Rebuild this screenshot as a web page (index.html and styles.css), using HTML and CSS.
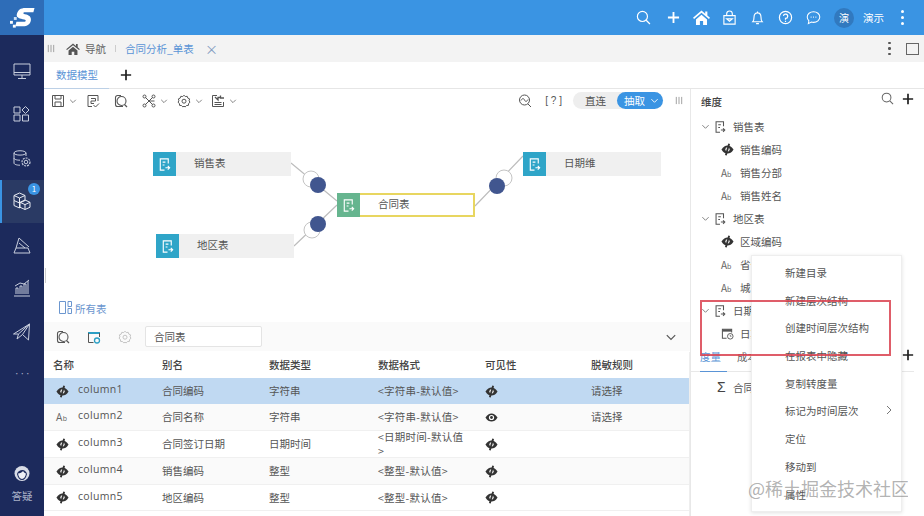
FILE: index.html
```html
<!DOCTYPE html>
<html lang="zh-CN">
<head>
<meta charset="utf-8">
<title>数据模型</title>
<link rel="stylesheet" href="styles.css">
</head>
<body>
<svg class="defs" aria-hidden="true">
  <symbol id="doc" viewBox="0 0 16 16"><path d="M12 7V2H3.500v12H8" fill="none" stroke="currentColor" stroke-width="1.200"/><path d="M6 5.500h3M6 8.500h2M9 11.500h4.500M11.500 9.500l2 2-2 2" fill="none" stroke="currentColor" stroke-width="1.200"/></symbol>
  <symbol id="eye-off" viewBox="0 0 14 14"><path d="M.5 7C2.500 3.800 4.600 2.600 7 2.600S11.500 3.800 13.500 7C11.500 10.200 9.400 11.400 7 11.400S2.500 10.200.5 7Z" fill="currentColor"/><circle cx="7" cy="7" r="2.300" fill="#fff"/><path d="M8.800.8 5.200 13.200" stroke="currentColor" stroke-width="2"/></symbol>
  <symbol id="eye" viewBox="0 0 14 14"><path d="M.5 7C2.500 3.800 4.600 2.600 7 2.600S11.500 3.800 13.500 7C11.500 10.200 9.400 11.400 7 11.400S2.500 10.200.5 7Z" fill="currentColor"/><circle cx="7" cy="7" r="2.800" fill="#fff"/><circle cx="7" cy="7" r="1.500" fill="currentColor"/></symbol>
  <symbol id="chev" viewBox="0 0 10 10"><path d="M1.500 3.500 5 7l3.500-3.500" fill="none" stroke="currentColor" stroke-width="1"/></symbol>
  <symbol id="plus" viewBox="0 0 14 14"><path d="M7 1v12M1 7h12" fill="none" stroke="currentColor" stroke-width="2"/></symbol>
  <symbol id="lens" viewBox="0 0 14 14"><circle cx="6" cy="6" r="4.700" fill="none" stroke="currentColor" stroke-width="1.100"/><path d="m9.500 9.500 3.500 3.500" stroke="currentColor" stroke-width="1.200"/></symbol>
  <symbol id="boxlens" viewBox="0 0 14 14"><path d="M7 1.500H3.500a2 2 0 0 0-2 2v7a2 2 0 0 0 2 2H9" fill="none" stroke="currentColor" stroke-width="1.100"/><circle cx="7.500" cy="7" r="4.500" fill="none" stroke="currentColor" stroke-width="1.100"/><path d="m10.500 10.500 2.500 2.500" stroke="currentColor" stroke-width="1.200"/></symbol>
  <symbol id="gear" viewBox="0 0 14 14"><path d="M7 1.200 8.300 2.600 10.200 2.300 10.800 4.100 12.600 4.900 12.100 6.800 13 8.200 11.600 9.500 11.400 11.400 9.500 11.500 8.200 12.900 7 12.300 5.800 12.900 4.500 11.500 2.600 11.400 2.400 9.500 1 8.200 1.900 6.800 1.400 4.900 3.200 4.100 3.800 2.300 5.700 2.600Z" fill="none" stroke="currentColor" stroke-width="1"/><circle cx="7" cy="7.200" r="2" fill="none" stroke="currentColor" stroke-width="1"/></symbol>
  <symbol id="lines" viewBox="0 0 8 10"><path d="M1 1v8M4 1v8M7 1v8" stroke="currentColor" stroke-width="1"/></symbol>
  <symbol id="home" viewBox="0 0 16 14"><path d="M8 .5 0 7.200l1 1.100L8 2.500l7 5.800 1-1.100-2.500-2.100V1.300h-2v2.200ZM2.800 8.800V14h3.700v-3.800h3V14h3.700V8.800L8 4.500Z" fill="currentColor"/></symbol>
</svg>

<div class="app">
  <header class="topbar">
    <div class="logo">
      <svg class="logo-mark" viewBox="0 0 26 24"><path d="M7 8.500C8 3.500 11 1.500 16 1.500h9.500l-1.200 4.500H15.500c-2 0-2.200 1.600 0 2 4.500.8 6.800 2.800 6.200 6.500-.6 4-3.800 6-8.200 6H5.500l1.200-4.500h7.800c2.300 0 2.600-2 .3-2.500C10.500 12.600 6.500 11.600 7 8.500Z" fill="#fff"/><rect x="0" y="15" width="3" height="3" fill="#fff"/><rect x="4" y="11" width="3" height="3" fill="#cfe2f7"/><rect x="3" y="19" width="3" height="3" fill="#fff"/></svg>
    </div>
    <div class="top-actions">
      <svg class="ti ti-search"><use href="#lens"/></svg>
      <svg class="ti ti-plus"><use href="#plus"/></svg>
      <svg class="ti ti-home"><use href="#home"/></svg>
      <svg class="ti ti-stroke" viewBox="0 0 16 16"><path d="M2 6h12v9H2ZM5 6V4a3 3 0 0 1 6 0v2M5 9.500h6L8 12Z" fill="none" stroke="currentColor" stroke-width="1.200"/></svg>
      <svg class="ti ti-stroke" viewBox="0 0 16 16"><path d="M3 12.500c1.200-1.300 1.300-2.500 1.300-5C4.300 4.500 6 3 8 3s3.700 1.500 3.700 4.500c0 2.500.1 3.700 1.300 5ZM6.500 14.500h3M8 1.500V3" fill="none" stroke="currentColor" stroke-width="1.200"/></svg>
      <svg class="ti ti-stroke" viewBox="0 0 16 16"><circle cx="8" cy="8" r="6.500" fill="none" stroke="currentColor" stroke-width="1.300"/><path d="M5.800 6.300A2.300 2.300 0 1 1 8 9v1.500M8 11.500v1.300" fill="none" stroke="currentColor" stroke-width="1.300"/></svg>
      <svg class="ti ti-stroke" viewBox="0 0 16 16"><path d="M8 1.800c3.800 0 6.700 2.500 6.700 5.700s-2.900 5.700-6.700 5.700c-.8 0-1.600-.1-2.300-.3L2.500 14.500l.6-3C2 10.400 1.300 9 1.300 7.500c0-3.200 2.900-5.700 6.700-5.700Z" fill="none" stroke="currentColor" stroke-width="1.100"/><path d="M5 7.500h.9M7.600 7.500h.9M10.100 7.500h.9" stroke="currentColor" stroke-width="1.400"/></svg>
      <span class="avatar">演</span>
      <span class="username">演示</span>
      <span class="kebab kebab-light"><i></i><i></i><i></i></span>
    </div>
  </header>

  <div class="body">
    <nav class="sidebar">
      <a class="side-item"><svg class="si" viewBox="0 0 20 20"><path d="M2 3h16v11H2ZM2 11.500h16M10 14v3M6 17.500h8" fill="none" stroke="currentColor" stroke-width="1"/></svg></a>
      <a class="side-item"><svg class="si" viewBox="0 0 20 20"><path d="M2 3h6v6H2ZM2 11h6v6H2ZM10.500 11h6v6h-6ZM13.500 2.500l3.500 3.500-3.500 3.500L10 6Z" fill="none" stroke="currentColor" stroke-width="1"/></svg></a>
      <a class="side-item"><svg class="si" viewBox="0 0 20 20"><path d="M2 5c0-3 12-3 12 0v3M2 5v10c0 1.500 3 2.200 6 2.200M2 5c0 2.800 12 2.800 12 0M2 10c0 1.500 3 2.200 6 2.200" fill="none" stroke="currentColor" stroke-width="1"/><circle cx="14" cy="14" r="1.800" fill="none" stroke="currentColor" stroke-width="1"/><circle cx="14" cy="14" r="4" fill="none" stroke="currentColor" stroke-width="1.200" stroke-dasharray="2 1"/></svg></a>
      <a class="side-item side-active"><svg class="si" viewBox="0 0 20 20"><path d="M7.500 2 13 4.500v5l-5.500 2.500L2 9.500v-5ZM2 4.500 7.500 7 13 4.500M7.500 7v10L2 14.500v-5" fill="none" stroke="currentColor" stroke-width="1"/><path d="M13 9l5 2.300v5L13 18.500l-5-2.200v-5ZM8 11.300l5 2.300 5-2.300M13 13.600v4.900" fill="none" stroke="currentColor" stroke-width="1"/></svg><span class="badge">1</span></a>
      <a class="side-item"><svg class="si" viewBox="0 0 20 20"><path d="M2 18h16l-2-5H4ZM4 13l3-10 10 9M7 8l6 5" fill="none" stroke="currentColor" stroke-width="1"/></svg></a>
      <a class="side-item"><svg class="si" viewBox="0 0 20 20"><path d="M2 18h16M4 16v-6h2v6M8 16V8h2v8M12 16V6h2v10M16 16V3M3 8l5-3 4 1 5-4" fill="none" stroke="currentColor" stroke-width="1"/></svg></a>
      <a class="side-item"><svg class="si" viewBox="0 0 20 20"><path d="M1.500 12 17.500 2l-1 16-6-5.500L5 17l1.500-5ZM6.500 12 17.500 2M10.500 12.500 17.500 2" fill="none" stroke="currentColor" stroke-width="1"/></svg></a>
      <a class="side-item side-more">•••</a>
      <a class="side-help">
        <svg class="help-icon" viewBox="0 0 18 18"><circle cx="9" cy="8.500" r="7.500" fill="#d8dce6"/><path d="M4 9c1-3 3-4 5.500-4 2 0 3.500 1.500 4.500 4-1 4-2.500 6-5 6s-4-2-5-6Z" fill="#1c2a5c"/><path d="M5 8.500c2 0 4-1 5-2.500 1 1.500 2 2.500 3 2.500-.5 3-2 5.500-4 5.500s-3.500-2.500-4-5.500Z" fill="#eef0f5"/></svg>
        <span>答疑</span>
      </a>
    </nav>

    <main class="main">
      <div class="tabbar">
        <svg class="grip"><use href="#lines"/></svg>
        <svg class="crumb-home"><use href="#home"/></svg>
        <span class="crumb">导航</span>
        <span class="crumb-sep"></span>
        <span class="crumb-active">合同分析_单表</span>
        <span class="crumb-close">×</span>
        <span class="kebab tab-kebab"><i></i><i></i><i></i></span>
        <span class="maximize"></span>
      </div>
      <div class="tabs">
        <span class="tab-active">数据模型</span>
        <svg class="tab-plus"><use href="#plus"/></svg>
      </div>

      <div class="content">
        <section class="left">
          <div class="toolbar">
            <svg class="tool" viewBox="0 0 14 14"><path d="M1.500 1.500h11v11h-11ZM4 1.500v3.500h6V1.500M4 12.500V8h6v4.500" fill="none" stroke="currentColor" stroke-width="1"/></svg>
            <svg class="tchev"><use href="#chev"/></svg>
            <svg class="tool tool-gap" viewBox="0 0 14 14"><path d="M6 12.500H2V1.500h10v5.500M5 4.500h4.500V7H5v2.500h3M7.500 11l2 2 3.500-3.500" fill="none" stroke="currentColor" stroke-width="1"/></svg>
            <svg class="tool tool-gap2"><use href="#boxlens"/></svg>
            <svg class="tool tool-gap2" viewBox="0 0 14 14"><g fill="none" stroke="currentColor" stroke-width="1"><circle cx="2.500" cy="2.500" r="1.500"/><circle cx="2.500" cy="11.500" r="1.500"/><circle cx="11.500" cy="2.500" r="1.500"/><circle cx="11.500" cy="11.500" r="1.500"/><path d="M3.500 3.500 7 7l3.500-3.500M3.500 10.500 7 7l3.500 3.500M7 7h5.500"/></g></svg>
            <svg class="tchev"><use href="#chev"/></svg>
            <svg class="tool tool-gap3"><use href="#gear"/></svg>
            <svg class="tchev"><use href="#chev"/></svg>
            <svg class="tool tool-gap4" viewBox="0 0 14 14"><path d="M6 1.500H1.500v11h11V8M3.500 10.500h7M3.500 8.500h7" fill="none" stroke="currentColor" stroke-width="1"/><path d="M4 3l3 3V3.500h2.500V1.500M9 4h4" fill="none" stroke="currentColor" stroke-width="1.300"/></svg>
            <svg class="tchev"><use href="#chev"/></svg>
            <span class="spacer"></span>
            <svg class="tool" viewBox="0 0 14 14"><circle cx="6.500" cy="6" r="5" fill="none" stroke="currentColor" stroke-width="1"/><path d="m10 10 3 3M3 6.500C4.500 4 5.500 4 6.500 6S8.500 8 10 5.500" fill="none" stroke="currentColor" stroke-width="1"/></svg>
            <span class="bracket">[ ? ]</span>
            <div class="switch">
              <span class="switch-off">直连</span>
              <span class="switch-on">抽取<svg class="switch-chev"><use href="#chev"/></svg></span>
            </div>
            <svg class="grip grip-right"><use href="#lines"/></svg>
          </div>

          <div class="canvas">
            <svg class="links" viewBox="44 111 646 211">
              <g stroke="#bdbdbd" stroke-width="1.200" fill="none">
                <path d="M291 162 337 200M294 245 337 204M475 205 523 155"/>
              </g>
              <g fill="#fff" stroke="#c4c4c4">
                <circle cx="311" cy="178" r="8"/>
                <circle cx="312" cy="229" r="8"/>
                <circle cx="504" cy="177" r="8"/>
              </g>
              <g fill="#41568f">
                <circle cx="318" cy="184" r="8"/>
                <circle cx="318" cy="223" r="8"/>
                <circle cx="497" cy="185" r="8"/>
              </g>
            </svg>
            <div class="node node-sales"><span class="node-icon"><svg><use href="#doc"/></svg></span><span class="node-label">销售表</span></div>
            <div class="node node-area"><span class="node-icon"><svg><use href="#doc"/></svg></span><span class="node-label">地区表</span></div>
            <div class="node node-date"><span class="node-icon"><svg><use href="#doc"/></svg></span><span class="node-label">日期维</span></div>
            <div class="node node-fact"><span class="node-icon"><svg><use href="#doc"/></svg></span><span class="node-label">合同表</span></div>
            <div class="all-tables">
              <svg class="all-icon" viewBox="0 0 13 13"><path d="M.5.500h6v12h-6ZM9 .500h3.500v5H9ZM9 7.500h3.500v5H9Z" fill="none" stroke="currentColor"/></svg>
              <span>所有表</span>
            </div>
          </div>

          <div class="table-tools">
            <svg class="tool tt-first"><use href="#boxlens"/></svg>
            <svg class="tool tt-blue" viewBox="0 0 14 14"><path d="M1 3h12" stroke="#2a9ec4" stroke-width="2"/><path d="M1.500 3v9.500h5M12.500 3v4" fill="none" stroke="#555" stroke-width="1"/><circle cx="10" cy="10.500" r="2.500" fill="none" stroke="#2a9ec4" stroke-width="1.300"/></svg>
            <svg class="tool tt-gear"><use href="#gear"/></svg>
            <div class="name-input">合同表</div>
            <span class="spacer"></span>
            <svg class="tt-chev"><use href="#chev"/></svg>
          </div>

          <div class="grid">
            <div class="row head"><span>名称</span><span>别名</span><span>数据类型</span><span>数据格式</span><span>可见性</span><span>脱敏规则</span></div>
            <div class="row selected">
              <span class="name"><svg class="fi"><use href="#eye-off"/></svg><b class="col">column1</b></span><span>合同编码</span><span>字符串</span><span class="fmt">&lt;字符串-默认值&gt;</span><span><svg class="vis"><use href="#eye-off"/></svg></span><span>请选择</span>
            </div>
            <div class="row stripe">
              <span class="name"><span class="ab">A<small>b</small></span><b class="col">column2</b></span><span>合同名称</span><span>字符串</span><span class="fmt">&lt;字符串-默认值&gt;</span><span><svg class="vis"><use href="#eye"/></svg></span><span>请选择</span>
            </div>
            <div class="row">
              <span class="name"><svg class="fi"><use href="#eye-off"/></svg><b class="col">column3</b></span><span>合同签订日期</span><span>日期时间</span><span class="fmt wrap">&lt;日期时间-默认值<br>&gt;</span><span><svg class="vis"><use href="#eye-off"/></svg></span><span></span>
            </div>
            <div class="row stripe">
              <span class="name"><svg class="fi"><use href="#eye-off"/></svg><b class="col">column4</b></span><span>销售编码</span><span>整型</span><span class="fmt">&lt;整型-默认值&gt;</span><span><svg class="vis"><use href="#eye-off"/></svg></span><span></span>
            </div>
            <div class="row">
              <span class="name"><svg class="fi"><use href="#eye-off"/></svg><b class="col">column5</b></span><span>地区编码</span><span>整型</span><span class="fmt">&lt;整型-默认值&gt;</span><span><svg class="vis"><use href="#eye-off"/></svg></span><span></span>
            </div>
          </div>
        </section>

        <aside class="right">
          <div class="right-head">
            <strong>维度</strong>
            <span class="spacer"></span>
            <svg class="rh-search"><use href="#lens"/></svg>
            <svg class="rh-plus"><use href="#plus"/></svg>
          </div>
          <ul class="tree">
            <li class="t-group"><svg class="t-chev"><use href="#chev"/></svg><svg class="t-doc"><use href="#doc"/></svg>销售表</li>
            <li class="t-leaf"><svg class="t-ic"><use href="#eye-off"/></svg>销售编码</li>
            <li class="t-leaf"><span class="t-ab">A<small>b</small></span>销售分部</li>
            <li class="t-leaf"><span class="t-ab">A<small>b</small></span>销售姓名</li>
            <li class="t-group"><svg class="t-chev"><use href="#chev"/></svg><svg class="t-doc"><use href="#doc"/></svg>地区表</li>
            <li class="t-leaf"><svg class="t-ic"><use href="#eye-off"/></svg>区域编码</li>
            <li class="t-leaf"><span class="t-ab">A<small>b</small></span>省份</li>
            <li class="t-leaf"><span class="t-ab">A<small>b</small></span>城市</li>
            <li class="t-group"><svg class="t-chev"><use href="#chev"/></svg><svg class="t-doc"><use href="#doc"/></svg>日期维</li>
            <li class="t-leaf"><svg class="t-ic t-cal" viewBox="0 0 14 14"><path d="M6 12H1.500V2.500h10V6" fill="none" stroke="currentColor" stroke-width="1.100"/><path d="M1.500 2.500h10V5h-10Z" fill="currentColor"/><circle cx="10" cy="10" r="3" fill="none" stroke="currentColor"/><path d="M10 8.500V10h1.300" fill="none" stroke="currentColor" stroke-width=".8"/></svg>日期</li>
          </ul>
          <div class="measure-tabs">
            <span class="m-active">度量</span>
            <span class="m-tab">成本</span>
            <span class="spacer"></span>
            <svg class="rh-plus"><use href="#plus"/></svg>
          </div>
          <div class="measure-row"><span class="sigma">Σ</span>合同金额</div>
        </aside>
      </div>
    </main>
  </div>

  <ul class="menu">
    <li>新建目录</li>
    <li>新建层次结构</li>
    <li>创建时间层次结构</li>
    <li>在报表中隐藏</li>
    <li>复制转度量</li>
    <li class="has-sub">标记为时间层次<svg class="sub-arrow" viewBox="0 0 8 10"><path d="m2 1 4 4-4 4" fill="none" stroke="currentColor"/></svg></li>
    <li>定位</li>
    <li>移动到</li>
    <li>属性</li>
  </ul>
  <div class="redbox"></div>
  <div class="splitter"></div>
  <div class="watermark">@稀土掘金技术社区</div>
</div>
</body>
</html>
```
FILE: styles.css
```css
* { box-sizing: border-box; }
html, body { margin: 0; padding: 0; height: 100%; overflow: hidden; }
body {
  font-family: "Noto Sans CJK SC", "Liberation Sans", sans-serif;
  font-size: 10.5px;
  color: #555;
  background: #fff;
}
ul { list-style: none; margin: 0; padding: 0; }
.defs { position: absolute; width: 0; height: 0; }
.spacer { flex: 1; }

.app { position: relative; width: 924px; height: 516px; display: flex; flex-direction: column; overflow: hidden; }

/* top bar */
.topbar { height: 35px; flex: none; display: flex; background: #3a94e3; color: #fff; }
.logo { width: 44px; background: #2e6db8; display: flex; align-items: center; justify-content: center; }
.logo-mark { width: 25px; height: 24px; }
.top-actions { flex: 1; display: flex; align-items: center; justify-content: flex-end; padding-right: 20px; }
.ti { width: 15px; height: 15px; color: #fff; }
.ti-search { margin-right: 16px; }
.ti-plus { width: 13px; height: 13px; margin-right: 13px; }
.ti-home { width: 17px; height: 15px; margin-right: 12px; }
.ti-stroke { margin-right: 13px; }
.avatar { width: 20px; height: 20px; border-radius: 50%; background: #3179bf; text-align: center; line-height: 20px; font-size: 10px; }
.username { margin: 0 17px 0 9px; font-size: 10.5px; }
.kebab { display: flex; flex-direction: column; gap: 3px; width: 3px; }
.kebab i { display: block; width: 3px; height: 3px; border-radius: 50%; background: #fff; }
.tab-kebab i { background: #555; width: 2.500px; height: 2.500px; }

.body { flex: 1; display: flex; min-height: 0; }

/* sidebar */
.sidebar { width: 44px; flex: none; background: #1c2a5c; color: #c8cedd; display: flex; flex-direction: column; padding-top: 14px; }
.side-item { position: relative; height: 43.500px; flex: none; display: flex; align-items: center; justify-content: center; }
.si { width: 20px; height: 20px; }
.side-active { background: #2a3a64; border-left: 2px solid #3a94e3; color: #e8ebf2; padding-right: 2px; }
.badge { position: absolute; top: 3px; right: 4px; width: 12px; height: 12px; border-radius: 50%; background: #3a94e3; color: #fff; font-size: 8px; line-height: 12px; text-align: center; }
.side-more { font-size: 6px; letter-spacing: -.5px; color: #aab2c8; height: 40px; }
.side-help { margin-top: auto; height: 51px; display: flex; flex-direction: column; align-items: center; font-size: 10.500px; color: #aab2c8; }
.help-icon { width: 18px; height: 18px; margin-bottom: 5px; }

.main { flex: 1; min-width: 0; display: flex; flex-direction: column; }

/* tab bar */
.tabbar { height: 27px; flex: none; display: flex; align-items: center; background: #f3f3f3; padding-left: 3px; padding-right: 5px; }
.grip { width: 8px; height: 9px; color: #999; }
.crumb-home { width: 14px; height: 12px; margin-left: 11px; color: #555; }
.crumb { margin-left: 5px; color: #666; margin-top: -1px; }
.crumb-sep { width: 1px; height: 7px; margin: 0 9px; background: #ccc; }
.crumb-active { color: #5a94d6; margin-top: -1px; }
.crumb-close { margin-left: 11px; color: #7f9ac0; font-size: 13px; line-height: 1; }
.tab-kebab { margin-left: auto; margin-right: 15px; gap: 3px; }
.maximize { width: 13px; height: 12px; border: 1px solid #666; }

/* tabs */
.tabs { height: 27px; flex: none; display: flex; align-items: center; border-bottom: 1px solid #e6e6e6; position: relative; }
.tab-active { width: 65px; height: 27px; padding-left: 12px; line-height: 25px; color: #5a94d6; border-bottom: 1px solid #bcd0e6; }
.tab-plus { width: 12px; height: 12px; margin-left: 11px; color: #222; }

.content { flex: 1; display: flex; min-height: 0; }
.left { width: 646px; flex: none; display: flex; flex-direction: column; min-height: 0; }

/* toolbar */
.toolbar { height: 23px; flex: none; display: flex; align-items: center; padding: 0 7px; color: #555; }
.tool { width: 14px; height: 14px; flex: none; color: #555; }
.tchev { width: 8px; height: 8px; margin-left: 4px; color: #666; }
.tool-gap { margin-left: 9px; }
.tool-gap2 { margin-left: 14px; }
.tool-gap3 { margin-left: 9px; }
.tool-gap4 { margin-left: 8px; }
.bracket { margin: 0 11px 0 13px; font-size: 10px; color: #555; font-family: "Liberation Sans", sans-serif; white-space: nowrap; }
.switch { width: 90px; height: 17px; border-radius: 9px; background: #eeeeee; display: flex; align-items: center; justify-content: space-between; }
.switch-off { margin-left: 12px; }
.switch-on { width: 46px; height: 17px; border-radius: 9px; background: #3a94e3; color: #fff; padding-left: 7px; line-height: 17px; display: flex; align-items: center; }
.switch-chev { width: 9px; height: 9px; margin-left: 5px; color: #fff; }
.grip-right { margin-left: 12px; }

/* canvas */
.canvas { position: relative; height: 210px; flex: none; display: flex; align-items: flex-end; padding: 0 0 6px 15px; }
.links { position: absolute; left: 0; top: 0; width: 646px; height: 211px; }
.node { position: absolute; width: 138px; height: 24px; display: flex; align-items: center; background: #f0f0f0; }
.node-icon { width: 23px; height: 100%; flex: none; background: #2fa5c8; color: #fff; display: flex; align-items: center; justify-content: center; }
.node-icon svg { width: 15px; height: 15px; }
.node-label { margin-left: 18px; margin-top: -3px; color: #555; }
.node-sales { left: 109px; top: 40px; }
.node-area { left: 112px; top: 122px; }
.node-date { left: 479px; top: 40px; }
.node-fact { left: 293px; top: 81px; background: #fff; border: 2px solid #e8d660; }
.node-fact .node-icon { background: #66b58f; margin-left: -2px; height: 24px; }
.all-tables { position: relative; display: flex; align-items: flex-end; gap: 3px; color: #6b96cf; }
.all-icon { width: 13px; height: 13px; margin-bottom: 2px; }

/* table tools */
.table-tools { height: 29px; flex: none; display: flex; align-items: center; background: #fafafa; padding: 0 13px 0 12px; }
.tt-first { margin-right: 17px; }
.tt-blue { margin-right: 17px; }
.tt-gear { margin-right: 13px; color: #c4c4c4; }
.name-input { width: 117px; height: 21px; padding-left: 8px; line-height: 20px; border: 1px solid #e4e4e4; border-radius: 2px; background: #fff; }
.tt-chev { width: 12px; height: 12px; color: #555; }

/* grid */
.grid { flex: 1; margin-top: 1px; border-right: 1px solid #eee; }
.row { display: grid; grid-template-columns: 109px 107px 109px 107px 106px 1fr; align-items: center; height: 26px; border-bottom: 1px solid #f0f0f0; }
.row > span { padding-left: 9px; margin-top: -1px; }
.head { height: 26px; border-bottom: 0; font-weight: 500; color: #444; }
.selected { background: #c0d9f2; border-bottom: 0; }
.stripe { background: #fafafa; height: 27px; }
.row:nth-child(4) { height: 27px; }
.name { display: flex; align-items: center; font-family: "Open Sans", "Liberation Sans", sans-serif; letter-spacing: .3px; }
.col { font-weight: 400; margin-top: -3px; }
.fi { width: 13px; height: 13px; margin: 1px 9px 0 3px; color: #333; flex: none; }
.ab { width: 13px; margin: 1px 9px 0 3px; font-size: 10px; color: #666; flex: none; line-height: 1; }
.ab small, .t-ab small { font-size: 7px; }
.vis { display: block; width: 13px; height: 13px; color: #333; margin-top: 1px; }
.fmt { letter-spacing: .25px; }
.wrap { line-height: 13.500px; }

/* right */
.right { flex: 1; min-width: 0; border-left: 1px solid #e8e8e8; padding-left: 10px; padding-right: 10px; }
.right-head { height: 24px; display: flex; align-items: center; }
.right-head strong { font-weight: 500; color: #444; }
.rh-search { width: 13px; height: 13px; color: #666; margin-right: 8px; margin-top: -5px; }
.rh-plus { width: 12px; height: 12px; color: #222; margin-top: -5px; }
.tree { padding-top: 2px; }
.tree li { height: 23px; display: flex; align-items: center; white-space: nowrap; }
.t-chev { width: 9px; height: 9px; margin-right: 3px; color: #777; }
.t-doc { width: 14px; height: 14px; margin-right: 6px; color: #555; }
.t-leaf { padding-left: 20px; }
.t-ic { width: 13px; height: 13px; margin-right: 6px; color: #333; flex: none; }
.t-cal { color: #555; }
.t-ab { width: 13px; margin-right: 6px; font-size: 10px; color: #666; flex: none; }
.measure-tabs { position: relative; height: 27px; display: flex; align-items: center; border-bottom: 1px solid #e8e8e8; margin-left: -10px; padding: 0 0 3px 9px; }
.m-active { color: #5a94d6; margin-right: 16px; }
.m-active::after { content: ""; position: absolute; left: 9px; bottom: -1px; width: 27px; height: 1px; background: #5a94d6; }
.m-tab { color: #666; }
.measure-tabs .rh-plus { margin-top: -3px; }
.measure-row { height: 30px; display: flex; align-items: center; padding-left: 16px; white-space: nowrap; }
.sigma { width: 16px; font-size: 14px; color: #444; line-height: 1; font-family: "Liberation Sans", sans-serif; }

/* overlays */
.menu { position: absolute; left: 751px; top: 255px; width: 151px; height: 257px; padding: 4px 0 0 33px; background: #fff; border: 1px solid #eee; box-shadow: 0 1px 4px rgba(0,0,0,.12); color: #555; }
.menu li { height: 27.700px; line-height: 26px; position: relative; }
.sub-arrow { position: absolute; right: 8px; top: 7px; width: 8px; height: 10px; color: #777; }
.redbox { position: absolute; left: 700px; top: 300px; width: 191px; height: 56px; border: 2px solid #d9414f; opacity: .85; }
.splitter { position: absolute; left: 45px; top: 268px; width: 1px; height: 15px; background: #ccc; }
.watermark { position: absolute; left: 748px; top: 476px; font-size: 18px; line-height: 24px; color: rgba(130,130,130,.62); white-space: nowrap; width: 160px; overflow: hidden; font-family: "Noto Sans CJK SC", sans-serif; }
```
